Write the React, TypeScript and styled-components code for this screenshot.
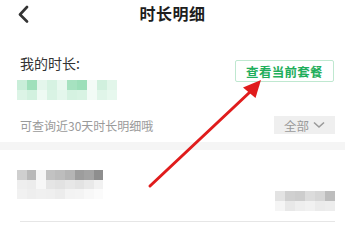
import styled, { createGlobalStyle } from "styled-components"

const GlobalStyle = createGlobalStyle`
  html, body {
    margin: 0;
    padding: 0;
    background: #ffffff;
  }
  body {
    font-family: "Noto Sans CJK SC", "Noto Sans", sans-serif;
    color: #333333;
  }
`

const greenCells = [
  ["#c9eed9", "#9fe0bb", "#e4f6ec", "#d6f2e2", "#e8f8ef", "#a6e2c0", "#9cdfb9", "#f4fbf7", "#d1f0de", "#e2f6ea"],
  ["#dcf4e6", "#d2f1df", "#eefaf3", "#d9f3e4", "#e4f7ec", "#d5f2e1", "#d8f3e3", "#f2fbf6", "#e0f5e9", "#e7f8ee"],
]

const grayCells = [
  ["#cfcfcf", "#b9b9b9", "#f6f6f6", "#c2c2c2", "#bdbdbd", "#b5b5b5", "#9d9d9d", "#a3a3a3", "#8e8e8e"],
  ["#eeeeee", "#ececec", "#f7f7f7", "#e5e5e5", "#e2e2e2", "#e7e7e7", "#e3e3e3", "#e9e9e9", "#f2f2f2"],
  ["#f1f1f1", "#eeeeee", "#f0f0f0", "#efefef", "#ececec", "#f3f3f3", "#f4f4f4", "#f8f8f8", "#fbfbfb"],
]

const rightCells = [
  ["#e3e3e3", "#d0d0d0", "#cdcdcd", "#dcdcdc", "#d6d6d6", "#bdbdbd"],
  ["#f5f5f5", "#e8e8e8", "#eeeeee", "#f1f1f1", "#ebebeb", "#ededed"],
]

function Mosaic({ cells, cell }: { cells: string[][]; cell: number }) {
  return (
    <MosaicGrid $cols={cells[0].length} $cell={cell}>
      {cells.flat().map((c, i) => (
        <MosaicCell key={i} $color={c} />
      ))}
    </MosaicGrid>
  )
}

export default function App() {
  return (
    <>
      <GlobalStyle />
      <Page>
        <Header>
          <BackButton>
            <svg width="14" height="18" viewBox="0 0 14 18">
              <path
                d="M10 2 L3 9.5 L10 16.5"
                fill="none"
                stroke="#333"
                strokeWidth="2.6"
                strokeLinecap="round"
                strokeLinejoin="round"
              />
            </svg>
          </BackButton>
          <Title>时长明细</Title>
          <span />
        </Header>

        <Summary>
          <SummaryLeft>
            <Label>我的时长:</Label>
            <Mosaic cells={greenCells} cell={10} />
          </SummaryLeft>
          <PlanButton>查看当前套餐</PlanButton>
        </Summary>

        <FilterRow>
          <Hint>可查询近30天时长明细哦</Hint>
          <FilterButton>
            全部
            <svg width="12" height="8" viewBox="0 0 12 8">
              <path d="M1 1.5 L6 6 L11 1.5" fill="none" stroke="#9a9a9a" strokeWidth="1.6" />
            </svg>
          </FilterButton>
        </FilterRow>

        <Divider />

        <ListItem>
          <ItemLeft>
            <Mosaic cells={grayCells} cell={9.6} />
          </ItemLeft>
          <ItemRight>
            <Mosaic cells={rightCells} cell={10} />
          </ItemRight>
        </ListItem>

        <Arrow width="345" height="232" viewBox="0 0 345 232">
          <line x1="150" y1="186" x2="250" y2="92" stroke="#e01c1c" strokeWidth="3" strokeLinecap="round" />
          <polygon points="261,80 243,87.5 255.5,98" fill="#e01c1c" />
        </Arrow>
      </Page>
    </>
  )
}

const Page = styled.div`
  position: relative;
  width: 345px;
  height: 232px;
  overflow: hidden;
  background: #ffffff;
`

const Header = styled.div`
  display: grid;
  grid-template-columns: 40px 1fr 40px;
  align-items: center;
  height: 26px;
`

const BackButton = styled.div`
  display: flex;
  align-items: center;
  padding-left: 17px;
  padding-top: 1px;
`

const Title = styled.div`
  text-align: center;
  font-size: 16px;
  font-weight: 700;
  color: #1e1e1e;
  letter-spacing: 0.5px;
`

const Summary = styled.div`
  display: flex;
  justify-content: space-between;
  align-items: flex-start;
  padding: 27px 11px 0 17px;
`

const SummaryLeft = styled.div`
  display: flex;
  flex-direction: column;
  gap: 7px;
`

const Label = styled.div`
  padding-left: 3px;
  font-size: 14px;
  line-height: 20px;
  color: #333333;
`

const PlanButton = styled.div`
  margin-top: 7px;
  width: 99px;
  height: 22px;
  box-sizing: border-box;
  display: flex;
  align-items: center;
  justify-content: center;
  border: 1px solid #bfe8d0;
  border-radius: 2px;
  font-size: 12.5px;
  font-weight: 700;
  color: #1fae5b;
  letter-spacing: 0.3px;
`

const MosaicGrid = styled.div<{ $cols: number; $cell: number }>`
  display: grid;
  grid-template-columns: repeat(${(p) => p.$cols}, ${(p) => p.$cell}px);
  grid-auto-rows: ${(p) => p.$cell}px;
`

const MosaicCell = styled.div<{ $color: string }>`
  background: ${(p) => p.$color};
`

const FilterRow = styled.div`
  display: flex;
  justify-content: space-between;
  align-items: center;
  padding: 16px 10px 0 20px;
`

const Hint = styled.div`
  font-size: 12px;
  color: #9a9a9a;
`

const FilterButton = styled.div`
  display: flex;
  align-items: center;
  justify-content: center;
  gap: 4px;
  width: 61px;
  height: 18px;
  background: #efefef;
  font-size: 12.5px;
  color: #9a9a9a;
`

const Divider = styled.div`
  margin-top: 8px;
  height: 8px;
  background: #f5f5f5;
`

const ListItem = styled.div`
  display: flex;
  justify-content: space-between;
  margin: 0 10px 0 20px;
  padding: 20px 0 10px;
  height: 41px;
  border-bottom: 1px solid #e6e6e6;
`

const ItemLeft = styled.div`
  margin-left: -3px;
`

const ItemRight = styled.div`
  align-self: flex-end;
`

const Arrow = styled.svg`
  position: absolute;
  left: 0;
  top: 0;
  pointer-events: none;
`
